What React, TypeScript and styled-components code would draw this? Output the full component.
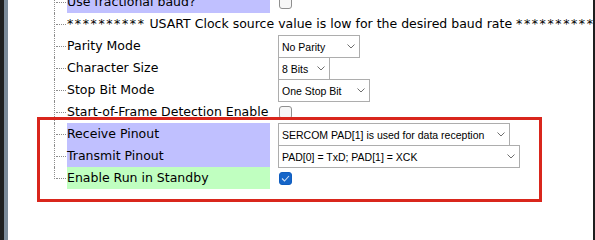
import styled, { createGlobalStyle } from 'styled-components';

const GlobalStyle = createGlobalStyle`
  html, body {
    margin: 0;
    padding: 0;
    background: #ffffff;
    overflow: hidden;
  }
`;

const Frame = styled.div`
  display: flex;
  width: 595px;
  height: 240px;
  overflow: hidden;
`;

const LeftEdge = styled.div`
  width: 4px;
  background: #1f1f1f;
  border-right: 4px solid #7b8a99;
`;

const RightEdge = styled.div`
  width: 2px;
  background: #1f1f1f;
`;

const Content = styled.div`
  position: relative;
  flex: 1;
  overflow: hidden;
  background: #ffffff;
`;

const Tree = styled.div`
  display: flex;
  flex-direction: column;
  margin-top: -9px;
  padding-left: 46px;
`;

const Row = styled.div`
  display: flex;
  align-items: flex-start;
  height: 22px;
`;

const Connector = styled.div<{ $last?: boolean }>`
  position: relative;
  flex: none;
  width: 12px;
  height: ${(p) => (p.$last ? '12px' : '22px')};
  border-left: 1px dotted #8c8c8c;
  &::after {
    content: '';
    position: absolute;
    left: 1px;
    top: 11px;
    width: 10px;
    border-top: 1px dotted #8c8c8c;
  }
`;

const Label = styled.div<{ $tone?: 'blue' | 'green' }>`
  flex: none;
  width: 203px;
  height: 22px;
  line-height: 22px;
  background: ${(p) => (p.$tone === 'blue' ? '#c0c0ff' : p.$tone === 'green' ? '#c0ffc0' : 'transparent')};
  font-family: 'DejaVu Sans', sans-serif;
  font-size: 12.5px;
  color: #000;
  white-space: nowrap;
`;

const Message = styled.div`
  line-height: 22px;
  font-family: 'DejaVu Sans', sans-serif;
  font-size: 12.5px;
  color: #000;
  white-space: nowrap;
`;

const Stars = styled.span`
  letter-spacing: 1.6px;
`;

const Control = styled.div`
  margin-left: 8px;
  height: 22px;
`;

const Select = styled.div<{ $w: number }>`
  box-sizing: border-box;
  display: flex;
  align-items: center;
  justify-content: space-between;
  width: ${(p) => p.$w}px;
  height: 23px;
  padding: 0 4px 0 3px;
  border: 1px solid #adadad;
  background: #ffffff;
  font-family: 'Liberation Sans', Arial, sans-serif;
  font-size: 10.5px;
  color: #000;
  white-space: nowrap;
`;

const Box = styled.div<{ $on?: boolean }>`
  box-sizing: border-box;
  width: 13px;
  height: 13px;
  margin: 5px 0 0 1px;
  border-radius: 3px;
  border: 1px solid ${(p) => (p.$on ? '#0f5dbf' : '#8f8f8f')};
  background: ${(p) => (p.$on ? '#1565c8' : '#f7f7f7')};
  display: flex;
  align-items: center;
  justify-content: center;
`;

const Annotation = styled.div`
  position: absolute;
  left: 29px;
  top: 117px;
  width: 505px;
  height: 85px;
  box-sizing: border-box;
  border: 3px solid #d9261c;
  pointer-events: none;
`;

const Chevron = () => (
  <svg width="8" height="5" viewBox="0 0 8 5">
    <polyline points="0.5,0.5 4,4 7.5,0.5" fill="none" stroke="#6e6e6e" strokeWidth="1" />
  </svg>
);

const Check = () => (
  <svg width="9" height="7" viewBox="0 0 9 7">
    <polyline points="1,3.5 3.5,6 8,1" fill="none" stroke="#cfe0f5" strokeWidth="1.1" />
  </svg>
);

const stars = '**********';

const App = () => (
  <>
    <GlobalStyle />
    <Frame>
      <LeftEdge />
      <Content>
        <Tree>
          <Row>
            <Connector />
            <Label $tone="blue">Use fractional baud?</Label>
            <Control><Box /></Control>
          </Row>
          <Row>
            <Connector />
            <Message>
              <Stars>{stars}</Stars> USART Clock source value is low for the desired baud rate <Stars>{stars}</Stars>
            </Message>
          </Row>
          <Row>
            <Connector />
            <Label>Parity Mode</Label>
            <Control><Select $w={82}>No Parity<Chevron /></Select></Control>
          </Row>
          <Row>
            <Connector />
            <Label>Character Size</Label>
            <Control><Select $w={52}>8 Bits<Chevron /></Select></Control>
          </Row>
          <Row>
            <Connector />
            <Label>Stop Bit Mode</Label>
            <Control><Select $w={92}>One Stop Bit<Chevron /></Select></Control>
          </Row>
          <Row>
            <Connector />
            <Label>Start-of-Frame Detection Enable</Label>
            <Control><Box /></Control>
          </Row>
          <Row>
            <Connector />
            <Label $tone="blue">Receive Pinout</Label>
            <Control><Select $w={232}>SERCOM PAD[1] is used for data reception<Chevron /></Select></Control>
          </Row>
          <Row>
            <Connector />
            <Label $tone="blue">Transmit Pinout</Label>
            <Control><Select $w={242}>PAD[0] = TxD; PAD[1] = XCK<Chevron /></Select></Control>
          </Row>
          <Row>
            <Connector $last />
            <Label $tone="green">Enable Run in Standby</Label>
            <Control><Box $on><Check /></Box></Control>
          </Row>
        </Tree>
        <Annotation />
      </Content>
      <RightEdge />
    </Frame>
  </>
);

export default App;
